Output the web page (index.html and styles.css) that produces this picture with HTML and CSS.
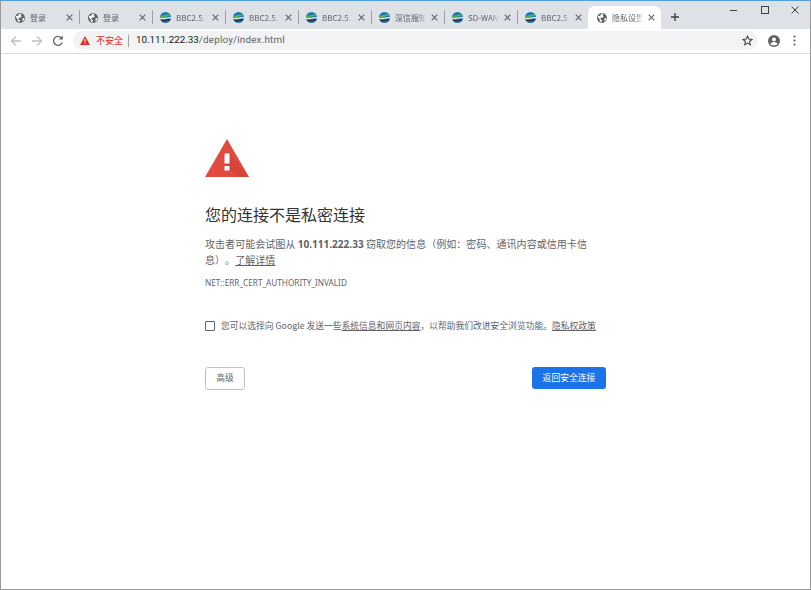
FILE: index.html
```html
<!DOCTYPE html>
<html lang="zh">
<head>
<meta charset="utf-8">
<title>隐私设置错误</title>
<link rel="stylesheet" href="styles.css">
</head>
<body>
<div class="window">
  <svg width="0" height="0" class="defs">
    <defs>
      <g id="globe">
        <circle cx="5" cy="5" r="5" fill="#5f6368"/>
        <path d="M1 3.2 3.4 2.4 4.6.6 6.6 1 5.6 2.6 6.8 3.6 5 4.8 3.4 4.6 3.8 6.4 5 7.400 4.400 9.400 2.800 8 2.600 6 1 4.600Z" fill="#fff"/>
        <path d="M7.400 5.600 9.400 4.800 9 7 7.600 8.400Z" fill="#fff"/>
      </g>
      <g id="ball">
        <circle cx="5.500" cy="5.500" r="5.500" fill="#1b75bb"/>
        <path d="M.6 3.200C3 4.400 7 2 9.600 2.400L10.400 3.800C7.600 3.600 3.600 6 .2 4.800Z" fill="#4fb848"/>
        <path d="M.1 5.400C3 6.800 7.600 4.400 11 5.200L11 6.400C7.600 5.800 3.400 8 .3 7Z" fill="#e8eef2"/>
        <path d="M.6 7.600C3.400 8.600 7.400 6.800 10.700 7.200L9.800 8.800 2 9.600Z" fill="#30343a"/>
      </g>
      <path id="close" d="M.7.7 6.300 6.300M6.300.7.7 6.300" stroke="#5f6368" stroke-width="1.100" fill="none"/>
    </defs>
  </svg>
  <div class="tabstrip">
    <div class="tab sep"><svg class="fav" width="10" height="10"><use href="#globe"/></svg><span class="tab-title">登录</span><svg class="x" width="7" height="7"><use href="#close"/></svg></div>
    <div class="tab sep"><svg class="fav" width="10" height="10"><use href="#globe"/></svg><span class="tab-title">登录</span><svg class="x" width="7" height="7"><use href="#close"/></svg></div>
    <div class="tab sep"><svg class="fav ballfav" width="11" height="11"><use href="#ball"/></svg><span class="tab-title">BBC2.5.7</span><svg class="x" width="7" height="7"><use href="#close"/></svg></div>
    <div class="tab sep"><svg class="fav ballfav" width="11" height="11"><use href="#ball"/></svg><span class="tab-title">BBC2.5.7</span><svg class="x" width="7" height="7"><use href="#close"/></svg></div>
    <div class="tab sep"><svg class="fav ballfav" width="11" height="11"><use href="#ball"/></svg><span class="tab-title">BBC2.5.7</span><svg class="x" width="7" height="7"><use href="#close"/></svg></div>
    <div class="tab sep"><svg class="fav ballfav" width="11" height="11"><use href="#ball"/></svg><span class="tab-title">深信服知识</span><svg class="x" width="7" height="7"><use href="#close"/></svg></div>
    <div class="tab sep"><svg class="fav ballfav" width="11" height="11"><use href="#ball"/></svg><span class="tab-title">SD-WAN</span><svg class="x" width="7" height="7"><use href="#close"/></svg></div>
    <div class="tab short"><svg class="fav ballfav" width="11" height="11"><use href="#ball"/></svg><span class="tab-title">BBC2.5.7</span><svg class="x" width="7" height="7"><use href="#close"/></svg></div>
    <div class="tab active"><svg class="fav" width="10" height="10"><use href="#globe"/></svg><span class="tab-title">隐私设置错误</span><svg class="x" width="7" height="7"><use href="#close"/></svg></div>
    <svg class="newtab" width="8" height="8"><path d="M4 0V8M0 4H8" stroke="#3c4043" stroke-width="1.400"/></svg>
    <div class="controls">
      <svg width="10" height="10"><path d="M0 5.500H7" stroke="#3c4043" stroke-width="1"/></svg>
      <svg width="10" height="10"><rect x="1.500" y="1.500" width="7" height="7" fill="none" stroke="#3c4043"/></svg>
      <svg width="10" height="10"><path d="M1.500 1.500 8.500 8.500M8.500 1.500 1.500 8.500" stroke="#3c4043"/></svg>
    </div>
  </div>
  <div class="toolbar">
    <svg class="nav" width="12" height="12"><path d="M11 6H2M6 1.500 1.500 6 6 10.500" stroke="#bdc1c6" stroke-width="1.300" fill="none"/></svg>
    <svg class="nav" width="12" height="12"><path d="M1 6H10M6 1.500 10.500 6 6 10.500" stroke="#bdc1c6" stroke-width="1.300" fill="none"/></svg>
    <svg class="nav" width="12" height="12"><path d="M10.200 7.500A4.500 4.500 0 1 1 9.400 2.800" stroke="#5f6368" stroke-width="1.300" fill="none"/><path d="M10.800 .6V4.600H6.800Z" fill="#5f6368"/></svg>
    <div class="omnibox">
      <svg class="warn" width="10" height="9"><path d="M5 0 10 9H0Z" fill="#d93025"/><path d="M4.500 3H5.500V6H4.500ZM4.500 6.800H5.500V7.800H4.500Z" fill="#fff"/></svg>
      <span class="insecure">不安全</span>
      <span class="divider"></span>
      <span class="url"><span class="host">10.111.222.33</span><span class="path">/deploy/index.html</span></span>
      <svg class="star" width="11" height="11" viewBox="0 0 24 24"><path d="M12 2.500 14.800 9l7 .6-5.300 4.600 1.600 6.900L12 17.400l-6.100 3.700 1.600-6.900L2.200 9.600l7-.6Z" fill="none" stroke="#3c4043" stroke-width="2.200"/></svg>
    </div>
    <svg class="avatar" width="12" height="12" viewBox="0 0 12 12"><circle cx="6" cy="6" r="6" fill="#5f6368"/><circle cx="6" cy="4.400" r="1.900" fill="#fff"/><path d="M2.400 9.100C3 7.500 4.600 7.100 6 7.100S9 7.500 9.600 9.100C8.700 10.100 7.400 10.500 6 10.500S3.300 10.100 2.400 9.100Z" fill="#fff"/></svg>
    <svg class="menu" width="3" height="11"><circle cx="1.500" cy="1.500" r="1.100" fill="#5f6368"/><circle cx="1.500" cy="5.500" r="1.100" fill="#5f6368"/><circle cx="1.500" cy="9.500" r="1.100" fill="#5f6368"/></svg>
  </div>
  <main class="page">
    <div class="interstitial">
      <svg class="alert" width="44" height="38" viewBox="0 0 44 38">
        <path d="M22 0 44 38H0Z" fill="#e04a3f"/>
        <path d="M24.500 14.500 44 38H33L19.500 27Z" fill="#c9402f" opacity=".45"/>
        <path d="M19.500 14.500H24.500V24.500H19.500ZM19.500 27H24.500V31.500H19.500Z" fill="#fff"/>
      </svg>
      <h1 class="title">您的连接不是私密连接</h1>
      <p class="message">攻击者可能会试图从 <strong>10.111.222.33</strong> 窃取您的信息（例如：密码、通讯内容或信用卡信息）。<a class="learn">了解详情</a></p>
      <p class="code">NET::ERR_CERT_AUTHORITY_INVALID</p>
      <div class="optin">
        <span class="checkbox"></span>
        <span class="optin-text">您可以选择向 Google 发送一些<a>系统信息和网页内容</a>，以帮助我们改进安全浏览功能。<a>隐私权政策</a></span>
      </div>
      <div class="buttons">
        <button class="btn secondary">高级</button>
        <button class="btn primary">返回安全连接</button>
      </div>
    </div>
  </main>
</div>
</body>
</html>
```
FILE: styles.css
```css
* { box-sizing: border-box; }
html, body { margin: 0; height: 100%; overflow: hidden; background: #fff; }
body { font-family: "Noto Sans CJK SC", "Noto Sans", sans-serif; color: #5f6368; text-spacing-trim: space-all; }
.defs { position: absolute; }
.window { width: 811px; height: 590px; display: flex; flex-direction: column; border: 1px solid #9a9a9a; border-top-color: #4f9fe3; }
.tabstrip { height: 28px; background: #dee1e6; display: flex; align-items: flex-end; padding-left: 6px; flex: none; }
.tab { width: 73px; height: 23px; display: flex; align-items: center; padding: 0 7px 0 8px; position: relative; font-size: 8px; color: #5f6368; flex: none; }
.tab.sep::after { content: ""; position: absolute; right: 0; top: 4px; width: 1px; height: 14px; background: #9aa0a6; }
.tab.short { width: 70px; padding-right: 6px; }
.tab.active { background: #fff; border-radius: 7px 7px 0 0; padding-left: 9px; padding-right: 6px; }
.fav { flex: none; margin-right: 5px; }
.ballfav { margin-left: -1px; }
.tab-title { flex: 1; min-width: 0; white-space: nowrap; overflow: hidden; -webkit-mask-image: linear-gradient(90deg, #000 75%, transparent); mask-image: linear-gradient(90deg, #000 75%, transparent); line-height: 14px; }
.x { flex: none; margin-left: 5px; }
.newtab { margin: 0 0 8px 10px; flex: none; }
.controls { margin-left: auto; align-self: flex-start; display: flex; gap: 20px; padding: 4px 10px 0 0; }
.toolbar { height: 25px; background: #fff; display: flex; align-items: center; padding: 0 0 1px 9px; border-bottom: 1px solid #dadce0; flex: none; }
.nav { margin-right: 9px; flex: none; }
.omnibox { width: 685px; height: 19px; background: #f1f3f4; border-radius: 10px; display: flex; align-items: center; padding: 0 5px 0 7px; font-size: 9.800px; flex: none; }
.warn { flex: none; margin-right: 6px; }
.insecure { color: #d93025; line-height: 14px; font-size: 9px; }
.divider { width: 1px; height: 12px; background: #9aa0a6; margin: 0 7px 0 5px; }
.url { color: #5f6368; font-family: Roboto, sans-serif; text-rendering: geometricPrecision; }
.host { color: #202124; }
.path { letter-spacing: .2px; }
.star { margin-left: auto; }
.avatar { margin-left: 10px; flex: none; }
.menu { margin-left: 13px; flex: none; }
.page { flex: 1; background: #fff; padding: 85px 0 0 204px; }
.interstitial { width: 401px; }
.alert { display: block; }
.title { margin: 25px 0 0; font-size: 16px; font-weight: 400; line-height: 24px; color: #333; }
.message { margin: 10px 0 0; font-size: 10.050px; line-height: 16px; color: #5f6368; }
.message strong { font-family: "Noto Sans", sans-serif; font-weight: 700; }
.learn, .optin a { text-decoration: underline; }
.code { margin: 9px 0 0; font-size: 8.200px; line-height: 12px; font-family: "Noto Sans", sans-serif; color: #5f6368; }
.optin { margin-top: 30px; display: flex; align-items: center; }
.checkbox { width: 10px; height: 10px; border: 1px solid #5f6368; border-radius: 1px; margin-right: 6px; flex: none; }
.optin-text { font-size: 8.770px; line-height: 14px; white-space: nowrap; color: #5f6368; }
.buttons { margin-top: 34px; display: flex; justify-content: space-between; }
.btn { font-family: inherit; font-size: 8.800px; height: 23px; border-radius: 3px; padding: 0; line-height: 1; }
.secondary { width: 40px; background: #fff; border: 1px solid #c0c3c6; color: #5f6368; }
.primary { width: 74px; height: 22px; background: #1a73e8; border: 0; color: #fff; }
```
